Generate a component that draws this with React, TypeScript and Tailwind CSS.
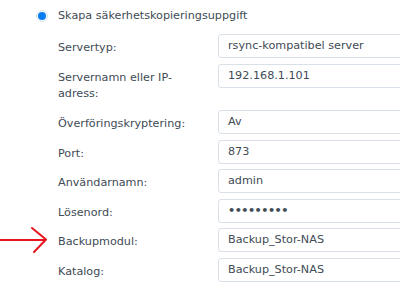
import React from "react";

const rows: { label: string; value: string; arrow?: boolean; secret?: boolean }[] = [
  { label: "Servertyp:", value: "rsync-kompatibel server" },
  { label: "Servernamn eller IP-adress:", value: "192.168.1.101" },
  { label: "Överföringskryptering:", value: "Av" },
  { label: "Port:", value: "873" },
  { label: "Användarnamn:", value: "admin" },
  { label: "Lösenord:", value: "•••••••••", secret: true },
  { label: "Backupmodul:", value: "Backup_Stor-NAS", arrow: true },
  { label: "Katalog:", value: "Backup_Stor-NAS" },
];

function Arrow() {
  return (
    <svg width="58" height="28" viewBox="0 0 58 28" className="block -mt-[2px]">
      <path d="M0 14 H46" stroke="#e5161d" strokeWidth="2" fill="none" />
      <path
        d="M32 2 L46 13.5 L34 26"
        stroke="#e5161d"
        strokeWidth="2"
        fill="none"
        strokeLinecap="round"
        strokeLinejoin="round"
      />
    </svg>
  );
}

export default function App() {
  return (
    <div
      className="w-[400px] h-[286px] overflow-hidden bg-white text-[#414b55] text-[11.2px] leading-[16px]"
      style={{ fontFamily: '"DejaVu Sans", Verdana, sans-serif' }}
    >
      <div className="pt-[8px]">
        {/* radio */}
        <div className="flex items-center h-[16px] mb-[10px]">
          <div className="w-[58px] flex justify-end pr-[10px]">
            <div className="w-[12px] h-[12px] rounded-full border border-[#d6e4f2] bg-white flex items-center justify-center">
              <div className="w-[8px] h-[8px] rounded-full bg-[#0a7cf0]" />
            </div>
          </div>
          <span className="whitespace-nowrap">Skapa säkerhetskopieringsuppgift</span>
        </div>

        <div className="flex flex-col gap-[5.5px]">
          {rows.map((r, i) => (
            <div key={r.label} className="flex items-start">
              <div className="w-[58px] shrink-0 h-[24px] overflow-visible">{r.arrow && <Arrow />}</div>
              <div className={`w-[160px] shrink-0 pr-[12px] pt-[6px] ${i === 1 ? "pb-[3px]" : ""}`}>
                {r.label}
              </div>
              <div className="w-[240px] shrink-0 h-[24px] border border-[#d9e0e8] rounded-[3px] bg-white pl-[9px] flex items-center whitespace-nowrap">
                <span className={r.secret ? "font-bold tracking-[-0.5px]" : ""}>{r.value}</span>
              </div>
            </div>
          ))}
        </div>
      </div>
    </div>
  );
}
